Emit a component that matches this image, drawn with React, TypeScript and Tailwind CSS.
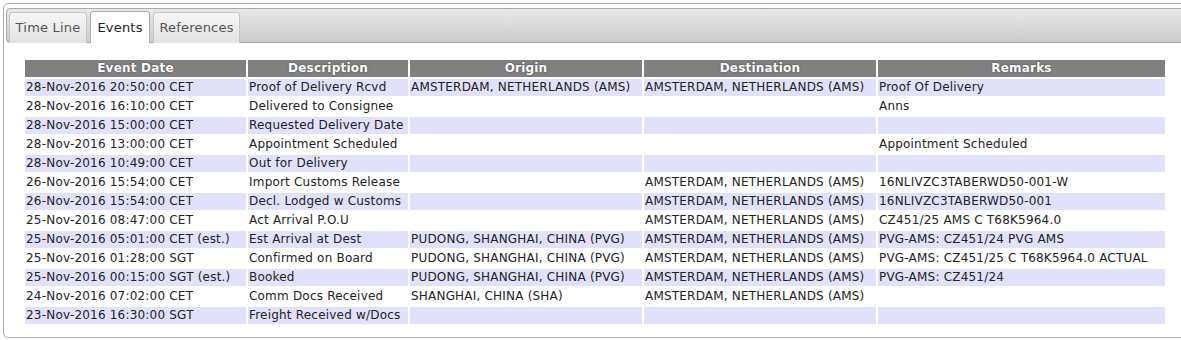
import React from "react";

const rows: string[][] = [
  ["28-Nov-2016 20:50:00 CET", "Proof of Delivery Rcvd", "AMSTERDAM, NETHERLANDS (AMS)", "AMSTERDAM, NETHERLANDS (AMS)", "Proof Of Delivery"],
  ["28-Nov-2016 16:10:00 CET", "Delivered to Consignee", "", "", "Anns"],
  ["28-Nov-2016 15:00:00 CET", "Requested Delivery Date", "", "", ""],
  ["28-Nov-2016 13:00:00 CET", "Appointment Scheduled", "", "", "Appointment Scheduled"],
  ["28-Nov-2016 10:49:00 CET", "Out for Delivery", "", "", ""],
  ["26-Nov-2016 15:54:00 CET", "Import Customs Release", "", "AMSTERDAM, NETHERLANDS (AMS)", "16NLIVZC3TABERWD50-001-W"],
  ["26-Nov-2016 15:54:00 CET", "Decl. Lodged w Customs", "", "AMSTERDAM, NETHERLANDS (AMS)", "16NLIVZC3TABERWD50-001"],
  ["25-Nov-2016 08:47:00 CET", "Act Arrival P.O.U", "", "AMSTERDAM, NETHERLANDS (AMS)", "CZ451/25 AMS C T68K5964.0"],
  ["25-Nov-2016 05:01:00 CET (est.)", "Est Arrival at Dest", "PUDONG, SHANGHAI, CHINA (PVG)", "AMSTERDAM, NETHERLANDS (AMS)", "PVG-AMS: CZ451/24 PVG AMS"],
  ["25-Nov-2016 01:28:00 SGT", "Confirmed on Board", "PUDONG, SHANGHAI, CHINA (PVG)", "AMSTERDAM, NETHERLANDS (AMS)", "PVG-AMS: CZ451/25 C T68K5964.0 ACTUAL"],
  ["25-Nov-2016 00:15:00 SGT (est.)", "Booked", "PUDONG, SHANGHAI, CHINA (PVG)", "AMSTERDAM, NETHERLANDS (AMS)", "PVG-AMS: CZ451/24"],
  ["24-Nov-2016 07:02:00 CET", "Comm Docs Received", "SHANGHAI, CHINA (SHA)", "AMSTERDAM, NETHERLANDS (AMS)", ""],
  ["23-Nov-2016 16:30:00 SGT", "Freight Received w/Docs", "", "", ""],
];

const headers = ["Event Date", "Description", "Origin", "Destination", "Remarks"];

export default function App() {
  return (
    <div className="w-[1181px] h-[340px] overflow-hidden bg-white font-['Verdana','DejaVu_Sans',sans-serif] text-[#222]">
      <div className="ml-[3px] mt-[3px] w-[1200px] h-[335px] border border-[#aaaaaa] rounded-[5px] bg-white pt-[4px] pl-[2px]">
        <div className="h-[35px] border border-[#aaaaaa] rounded-[4px] bg-gradient-to-b from-[#e9e9e9] to-[#cccccc] flex items-end pl-[2px] gap-[3px]">
          <div className="h-[31px] w-[78px] flex items-center justify-center border border-b-0 border-[#c5c5c5] rounded-t-[4px] bg-gradient-to-b from-[#f6f6f6] to-[#e2e2e2] text-[13px] tracking-[0.2px] text-[#555] -mb-px">
            Time Line
          </div>
          <div className="h-[32px] w-[60px] flex items-center justify-center border border-b-0 border-[#aaaaaa] rounded-t-[4px] bg-white text-[13px] tracking-[0.2px] text-[#212121] -mb-px">
            Events
          </div>
          <div className="h-[31px] w-[87px] flex items-center justify-center border border-b-0 border-[#c5c5c5] rounded-t-[4px] bg-gradient-to-b from-[#f6f6f6] to-[#e2e2e2] text-[13px] tracking-[0.2px] text-[#555] -mb-px">
            References
          </div>
        </div>
        <div className="ml-[19px] mt-[17px] grid grid-cols-[221px_160px_232px_232px_287px] gap-[2px] text-[12px] leading-[17px] tracking-[0.2px]">
          {headers.map((h) => (
            <div
              key={h}
              className="h-[17px] bg-[#808080] text-white font-bold text-center [text-shadow:0_0_2px_#444]"
            >
              {h}
            </div>
          ))}
          {rows.map((r, i) =>
            r.map((c, j) => (
              <div
                key={i + "-" + j}
                className={
                  "h-[17px] pl-[1px] whitespace-nowrap overflow-hidden " +
                  (i % 2 === 0 ? "bg-[#e1e1fc]" : "bg-white")
                }
              >
                {c}
              </div>
            ))
          )}
        </div>
      </div>
    </div>
  );
}
